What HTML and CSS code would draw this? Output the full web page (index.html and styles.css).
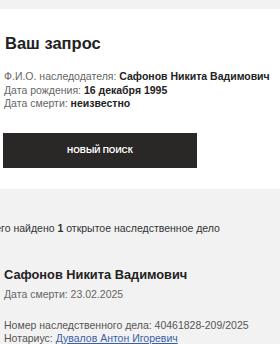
FILE: index.html
```html
<!DOCTYPE html>
<html lang="ru">
<head>
<meta charset="utf-8">
<link rel="stylesheet" href="styles.css">
</head>
<body>
<div class="topbar"></div>
<section class="request">
  <h1 class="request-title">Ваш запрос</h1>
  <div class="request-info">
    <div class="row"><span class="label">Ф.И.О. наследодателя:</span> <b class="value">Сафонов Никита Вадимович</b></div>
    <div class="row"><span class="label">Дата рождения:</span> <b class="value">16 декабря 1995</b></div>
    <div class="row"><span class="label">Дата смерти:</span> <b class="value">неизвестно</b></div>
  </div>
  <button class="btn">новый поиск</button>
</section>
<section class="results">
  <p class="summary">Всего найдено <b>1</b> открытое наследственное дело</p>
  <div class="case">
    <h2 class="case-name">Сафонов Никита Вадимович</h2>
    <div class="case-death">Дата смерти: 23.02.2025</div>
    <div class="case-details">
      <div class="row">Номер наследственного дела: 40461828-209/2025</div>
      <div class="row">Нотариус: <a href="#" class="link">Дувалов Антон Игоревич</a></div>
    </div>
  </div>
</section>
</body>
</html>
```
FILE: styles.css
```css
html, body {
  margin: 0;
  padding: 0;
}
body {
  background: #f2f2f2;
  font-family: "Liberation Sans", Arial, sans-serif;
  color: #222;
  overflow: hidden;
}
.topbar {
  height: 9px;
  background: #f2f2f2;
}
.request {
  background: #fff;
  padding: 24px 4px 21px 4px;
}
.request-title {
  margin: 0 0 0 1px;
  font-size: 16.5px;
  line-height: 20px;
  font-weight: bold;
  color: #222;
}
.request-info {
  margin-top: 17px;
  font-size: 10.5px;
  line-height: 13.5px;
}
.label {
  color: #666;
}
.value {
  color: #222;
}
.btn {
  display: flex;
  align-items: center;
  justify-content: center;
  margin: 22px 0 0 -1px;
  width: 194px;
  height: 35px;
  border: 0;
  background: #2a2727;
  color: #fff;
  font-family: "Liberation Sans", Arial, sans-serif;
  font-weight: bold;
  font-size: 8.5px;
  text-transform: uppercase;
  padding: 0;
}
.results {
  padding: 33px 4px 0 4px;
}
.summary {
  margin: 0 0 0 -21px;
  font-size: 10.5px;
  line-height: 13px;
  color: #333;
  white-space: nowrap;
}
.case {
  margin-top: 32px;
}
.case-name {
  margin: 0;
  font-size: 12.8px;
  line-height: 16px;
  font-weight: bold;
  color: #222;
}
.case-death {
  margin-top: 5px;
  font-size: 10.5px;
  line-height: 13px;
  color: #666;
}
.case-details {
  margin-top: 18px;
  font-size: 10.5px;
  line-height: 13px;
  color: #555;
}
.link {
  color: #3b5fa8;
  text-decoration: underline;
}
```
